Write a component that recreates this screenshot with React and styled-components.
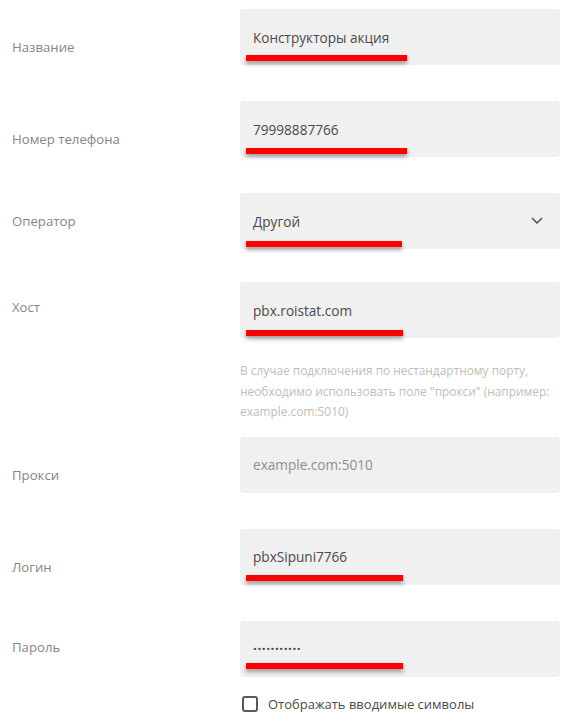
import React from "react";
import styled, { createGlobalStyle } from "styled-components";

const Global = createGlobalStyle`
  html, body {
    margin: 0;
    padding: 0;
    background: #fff;
  }
  body {
    font-family: "Open Sans", "Liberation Sans", sans-serif;
  }
`;

export default function App() {
  return (
    <Form>
      <Global />
      <Row>
        <Label $top={28}>Название</Label>
        <Field>
          <Input readOnly value="Конструкторы акция" />
          <Mark $top={46} $width={161} />
        </Field>
      </Row>

      <Row $gap={36}>
        <Label $top={28}>Номер телефона</Label>
        <Field>
          <Input readOnly value="79998887766" />
          <Mark $top={47} $width={161} />
        </Field>
      </Row>

      <Row $gap={36}>
        <Label $top={18}>Оператор</Label>
        <Field>
          <SelectValue>Другой</SelectValue>
          <Chevron width="12" height="8" viewBox="0 0 12 8">
            <path d="M1.5 1.5L6 6l4.5-4.5" fill="none" stroke="#555" strokeWidth="1.7" strokeLinecap="round" strokeLinejoin="round" />
          </Chevron>
          <Mark $top={48} $width={156} />
        </Field>
      </Row>

      <Row $gap={33}>
        <Label $top={15}>Хост</Label>
        <Field>
          <Input readOnly value="pbx.roistat.com" />
          <Mark $top={48} $width={157} />
        </Field>
      </Row>

      <Row $gap={22}>
        <span />
        <Hint>
          В случае подключения по нестандартному порту,
          <br />
          необходимо использовать поле "прокси" (например:
          <br />
          example.com:5010)
        </Hint>
      </Row>

      <Row $gap={15}>
        <Label $top={28}>Прокси</Label>
        <Field>
          <Input readOnly placeholder="example.com:5010" />
        </Field>
      </Row>

      <Row $gap={36}>
        <Label $top={28}>Логин</Label>
        <Field>
          <Input readOnly value="pbxSipuni7766" />
          <Mark $top={46} $width={157} />
        </Field>
      </Row>

      <Row $gap={36}>
        <Label $top={16}>Пароль</Label>
        <Field>
          <Input readOnly value="···········" $secret />
          <Mark $top={42} $width={157} />
        </Field>
      </Row>

      <Row $gap={18}>
        <span />
        <CheckLine>
          <Box />
          <CheckText>Отображать вводимые символы</CheckText>
        </CheckLine>
      </Row>
    </Form>
  );
}

const Form = styled.div`
  display: flex;
  flex-direction: column;
  padding-top: 9px;
  width: 567px;
`;

const Row = styled.div`
  display: grid;
  grid-template-columns: 240px 320px;
  margin-top: ${(p) => p.$gap || 0}px;
`;

const Label = styled.div`
  padding-left: 12px;
  padding-top: ${(p) => p.$top}px;
  font-size: 13.2px;
  line-height: 20px;
  color: #858585;
`;

const Field = styled.div`
  position: relative;
  display: flex;
  align-items: center;
  height: 56px;
  background: #f0f0f0;
  border-radius: 4px;
`;

const Input = styled.input`
  width: 100%;
  height: 100%;
  box-sizing: border-box;
  border: none;
  outline: none;
  background: transparent;
  padding: 0 13px;
  font-family: "Open Sans", "Liberation Sans", sans-serif;
  font-size: 13.6px;
  color: #4a4a4a;
  letter-spacing: ${(p) => (p.$secret ? "0.5px" : "0")};
  font-weight: ${(p) => (p.$secret ? 700 : 400)};
  &::placeholder {
    color: #8e8e8e;
  }
`;

const SelectValue = styled.div`
  flex: 1;
  padding-left: 13px;
  font-size: 13.6px;
  color: #4a4a4a;
`;

const Chevron = styled.svg`
  margin-right: 17px;
`;

const Mark = styled.div`
  position: absolute;
  left: 6px;
  top: ${(p) => p.$top}px;
  width: ${(p) => p.$width}px;
  height: 6px;
  background: #ff0000;
  box-shadow: 0 3px 4px rgba(0, 0, 0, 0.35);
`;

const Hint = styled.div`
  font-size: 11.9px;
  line-height: 20.5px;
  color: #bdbdbd;
`;

const CheckLine = styled.label`
  display: flex;
  align-items: center;
  gap: 10px;
  padding-left: 2px;
`;

const Box = styled.span`
  width: 16px;
  height: 16px;
  box-sizing: border-box;
  border: 2px solid #595959;
  border-radius: 3px;
`;

const CheckText = styled.span`
  font-size: 13px;
  color: #4a4a4a;
`;
